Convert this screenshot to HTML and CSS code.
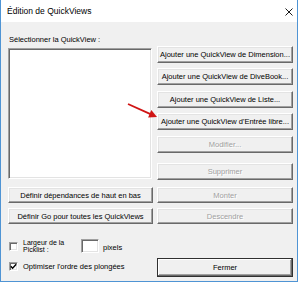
FILE: index.html
```html
<!DOCTYPE html>
<html>
<head>
    <title>Édition de QuickViews</title>
    <link rel="stylesheet" href="styles.css">
</head>
<body>

<div class="window">
  <div class="titlebar">
    <span class="title">Édition de QuickViews</span>
    <svg class="close" width="8" height="8" viewBox="0 0 8 8">
      <path d="M0.5 0.5 L7.5 7.5 M7.5 0.5 L0.5 7.5" stroke="#000" stroke-width="0.9" fill="none"/>
    </svg>
  </div>

  <div class="content">
    <div class="col-left">
      <div class="label">Sélectionner la QuickView :</div>
      <div class="listbox"></div>
      <button class="btn btn-low btn-deps">Définir dépendances de haut en bas</button>
      <button class="btn btn-low btn-go">Définir Go pour toutes les QuickViews</button>

      <div class="opt-row opt-width">
        <span class="checkbox"></span>
        <span class="opt-label two-lines"><span class="line">Largeur de la</span><span class="line">Picklist :</span></span>
        <span class="textbox"></span>
        <span class="unit">pixels</span>
      </div>
      <div class="opt-row opt-order">
        <span class="checkbox">
          <svg width="7" height="7" viewBox="0 0 7 7"><path d="M0.8 3.2 L2.6 5.2 L6.2 1.2" stroke="#000" stroke-width="1.4" fill="none"/></svg>
        </span>
        <span class="opt-label">Optimiser l'ordre des plongées</span>
      </div>
    </div>

    <div class="col-right">
      <button class="btn b1">Ajouter une QuickView de Dimension...</button>
      <button class="btn b2">Ajouter une QuickView de DiveBook...</button>
      <button class="btn b3">Ajouter une QuickView de Liste...</button>
      <button class="btn b4">Ajouter une QuickView d'Entrée libre...</button>
      <button class="btn b5" disabled>Modifier...</button>
      <button class="btn b6" disabled>Supprimer</button>
      <button class="btn btn-low b7" disabled>Monter</button>
      <button class="btn btn-low b8" disabled>Descendre</button>
      <button class="btn btn-default b9">Fermer</button>
    </div>
  </div>

  <!-- annotation arrow drawn over the dialog -->
  <svg class="arrow" width="40" height="24" viewBox="0 0 40 24">
    <line x1="7" y1="6" x2="29.5" y2="16.1" stroke="#d01414" stroke-width="1.8"/>
    <polygon points="36,19 27.1,19.4 30.3,12.1" fill="#d01414"/>
  </svg>
</div>

</body>
</html>
```

FILE: styles.css
```css
body {
    margin: 0;
    padding: 0;
    background-color: #fff;
    font-family: "Liberation Sans", Arial, sans-serif;
}

.window {
    position: relative;
    box-sizing: border-box;
    width: 298px;
    height: 282px;
    background-color: #f0f0f0;
    border: 1px solid #4f94d4;
    border-top: none;
}

.titlebar {
    height: 22px;
    background-color: #fff;
    display: flex;
    justify-content: space-between;
    align-items: flex-start;
}

.title {
    font-size: 8.5px;
    line-height: 10px;
    margin: 6px 0 0 6px;
    color: #000;
}

.close {
    margin: 8px 4px 0 0;
}

.content {
    display: flex;
    gap: 4px;
    padding-left: 7px;
}

.col-left,
.col-right {
    display: flex;
    flex-direction: column;
}

.col-left {
    width: 145px;
}

.col-right {
    width: 136px;
}

.label {
    font-size: 7.5px;
    line-height: 11px;
    margin-top: 12px;
    padding-left: 1px;
}

/* sunken white boxes */
.listbox,
.textbox,
.checkbox {
    box-sizing: border-box;
    background-color: #fff;
    border: 1px solid;
    border-color: #a0a0a0 #fff #fff #a0a0a0;
    box-shadow: inset 1px 1px #696969, inset -1px -1px #e3e3e3;
}

.listbox {
    margin-top: 3px;
    width: 144px;
    height: 131px;
}

.btn {
    box-sizing: border-box;
    height: 17px;
    padding: 0;
    font-family: "Liberation Sans", Arial, sans-serif;
    font-size: 7.5px;
    color: #000;
    background-color: #f0f0f0;
    border: 1px solid;
    border-color: #fff #696969 #696969 #fff;
    box-shadow: inset -1px -1px #a0a0a0, inset 1px 1px #e3e3e3;
    white-space: nowrap;
}

.btn:disabled {
    color: #a0a0a0;
    text-shadow: 1px 1px #fff;
}

.btn-low {
    height: 16px;
}

.btn-deps { margin-top: 8px; }
.btn-go { margin-top: 5px; }

.b1 { margin-top: 24px; }
.b2 { margin-top: 5px; }
.b3 { margin-top: 6px; }
.b4 { margin-top: 5px; }
.b5 { margin-top: 6px; }
.b6 { margin-top: 10px; }
.b7 { margin-top: 7px; }
.b8 { margin-top: 5px; }

.btn-default {
    height: 19px;
    margin-top: 34px;
    border: 1px solid #303030;
    box-shadow: inset -1px -1px #696969, inset 1px 1px #fff, inset -2px -2px #a0a0a0;
}

.opt-row {
    display: flex;
    align-items: center;
    font-size: 7.5px;
    padding-left: 1px;
}

.opt-width {
    margin-top: 15px;
    height: 14px;
}

.opt-order {
    margin-top: 9px;
    height: 9px;
}

.checkbox {
    width: 9px;
    height: 9px;
    flex: none;
    display: flex;
    align-items: center;
    justify-content: center;
}

.opt-label {
    margin-left: 5px;
    line-height: 9px;
}

.two-lines {
    display: flex;
    flex-direction: column;
    width: 58px;
}

.two-lines .line {
    font-size: 7px;
    line-height: 7px;
    height: 7px;
}

.textbox {
    width: 18px;
    height: 14px;
}

.unit {
    margin-left: 4px;
    margin-top: 3px;
}

.arrow {
    position: absolute;
    left: 120px;
    top: 98px;
}
```
